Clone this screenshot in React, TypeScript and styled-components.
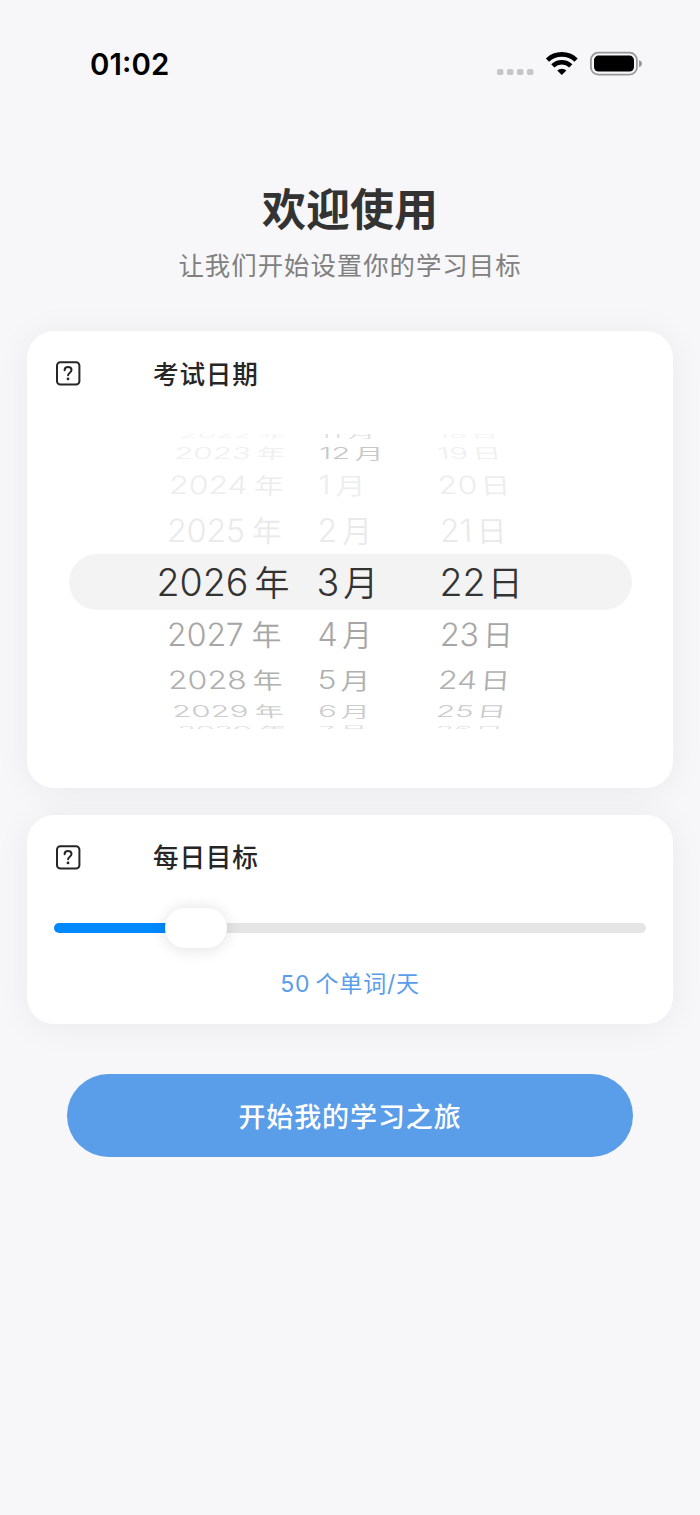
import React from "react";
import styled, { createGlobalStyle } from "styled-components";

const GlobalStyle = createGlobalStyle`
  * { box-sizing: border-box; }
  body {
    margin: 0;
    background: #f7f7fa;
    font-family: Inter, "Noto Sans CJK SC", sans-serif;
    color: #2c2c2c;
  }
`;

const Screen = styled.div`
  width: 700px;
  height: 1515px;
  overflow: hidden;
  display: flex;
  flex-direction: column;
  background: #f7f7fa;
`;

const StatusBar = styled.header`
  flex: none;
  height: 130px;
  padding: 45px 57px 0 90px;
  display: flex;
  align-items: flex-start;
  justify-content: space-between;
`;

const Clock = styled.time`
  font-size: 29.4px;
  font-weight: 560;
  line-height: 40px;
  letter-spacing: 0.1px;
  font-feature-settings: "case";
  color: #000;
`;

const StatusIcons = styled.svg`
  display: block;
  width: 148px;
  height: 40px;
`;

const Heading = styled.div`
  flex: none;
  height: 201px;
  padding-top: 50px;
  text-align: center;
`;

const Title = styled.h1`
  margin: 0;
  font-size: 44px;
  line-height: 60px;
  font-weight: 700;
  color: #333;
`;

const Subtitle = styled.p`
  margin: 10px 0 0;
  font-size: 25.4px;
  line-height: 32px;
  letter-spacing: 1px;
  color: #808080;
`;

const Card = styled.section<{ $height: number }>`
  flex: none;
  height: ${(p) => p.$height}px;
  margin: 0 27px 27px;
  padding: 0 27px;
  border-radius: 27px;
  background: #fff;
  box-shadow: 0 3px 36px rgba(0, 0, 0, 0.055);
`;

const CardHeader = styled.div`
  height: 84px;
  padding-left: 1px;
  display: flex;
  align-items: center;
`;

const HelpIcon = styled.svg`
  display: block;
  width: 26px;
  height: 26px;
  margin-right: 72px;
`;

const CardTitle = styled.h2`
  margin: 0;
  padding-top: 3px;
  font-size: 25.6px;
  line-height: 36px;
  font-weight: 500;
  letter-spacing: 0.8px;
  color: #262626;
`;

const Wheel = styled.div`
  position: relative;
  height: 295px;
  margin: 19px 14.5px 0 14.5px;
  padding: 2px 0 0 89.5px;
  overflow: hidden;
  display: flex;
  align-items: center;
`;

const SelectionBand = styled.div`
  position: absolute;
  left: 0;
  right: 0;
  top: 119.5px;
  height: 56px;
  border-radius: 28px;
  background: #f3f3f3;
`;

const WheelColumn = styled.div<{ $width: number }>`
  position: relative;
  flex: none;
  width: ${(p) => p.$width}px;
`;

const WheelRow = styled.div<{ $height: number }>`
  height: ${(p) => p.$height}px;
  display: flex;
  align-items: center;
`;

const WheelValue = styled.div<{
  $size: number;
  $gap: number;
  $sx: number;
  $sy: number;
  $skew: number;
  $indent: number;
  $tone: string;
}>`
  flex: none;
  margin-left: ${(p) => p.$indent}px;
  display: flex;
  align-items: center;
  gap: ${(p) => p.$gap}px;
  font-size: ${(p) => p.$size}px;
  font-weight: 360;
  line-height: 1;
  white-space: nowrap;
  color: ${(p) => p.$tone};
  transform-origin: left center;
  transform: scale(${(p) => p.$sx}, ${(p) => p.$sy}) skewX(${(p) => p.$skew}deg);
`;

const Unit = styled.span`
  font-family: "Noto Sans CJK SC", sans-serif;
  font-size: 0.93em;
  font-weight: 350;
  line-height: 1;
  padding-bottom: 0.08em;
`;

const Slider = styled.div`
  height: 58px;
  display: flex;
  align-items: center;
`;

const TrackFill = styled.div`
  flex: none;
  width: 125px;
  height: 10px;
  margin-right: -14px;
  border-radius: 5px 0 0 5px;
  background: #0088ff;
`;

const Thumb = styled.div`
  flex: none;
  z-index: 1;
  width: 62px;
  height: 40px;
  border-radius: 20px;
  background: #fff;
  box-shadow: 0 1px 16px rgba(0, 0, 0, 0.13);
`;

const TrackRest = styled.div`
  flex: 1;
  height: 10px;
  margin-left: -14px;
  border-radius: 0 5px 5px 0;
  background: #e5e5e5;
`;

const GoalText = styled.p`
  margin: 11px 0 0;
  text-align: center;
  font-size: 23px;
  line-height: 32px;
  letter-spacing: 0.8px;
  word-spacing: -2px;
  color: #5a9de9;
`;

const StartButton = styled.button`
  flex: none;
  height: 83px;
  margin: 23px 67px 0;
  padding: 0;
  border: 0;
  border-radius: 42px;
  background: #5a9de9;
  color: #fff;
  font-family: "Noto Sans CJK SC", sans-serif;
  font-size: 27px;
  font-weight: 500;
  letter-spacing: 0.9px;
`;

const ROW_HEIGHTS = [17, 20, 43, 49, 55, 50, 40, 21, 17];
const ROW_SCALE_X = [0.92, 0.98, 1, 1, 1, 1, 1, 0.98, 0.94];
const ROW_SCALE_Y = [0.3, 0.51, 0.78, 1, 1.02, 1, 0.78, 0.51, 0.3];
const TONES = ["#f2f2f2", "#f0f0f0", "#ededed", "#eaeaea", "#333", "#a6a6a6", "#b0b0b0", "#cccccc", "#dddddd"];

type Column = {
  unit: string;
  width: number;
  values: string[];
  indents: number[];
  gaps: number[];
  lean: number;
  tones?: Record<number, string>;
};

const COLUMNS: Column[] = [
  {
    unit: "年",
    width: 159,
    values: ["2022", "2023", "2024", "2025", "2026", "2027", "2028", "2029", "2030"],
    indents: [22, 15.5, 10.5, 8.5, -1.5, 8.5, 10, 14, 19.5],
    gaps: [8, 6, 6.5, 7, 6, 7.5, 6, 6, 8],
    lean: -0.7,
  },
  {
    unit: "月",
    width: 123,
    values: ["11", "12", "1", "2", "3", "4", "5", "6", "7"],
    indents: [1.5, 1.5, 1, 0.5, -0.5, 0.5, 0.5, 1, 1],
    gaps: [6, 4, 5, 5, 4, 4.5, 4, 4, 5],
    lean: 0,
    tones: { 0: "#dedede", 1: "#c8c8c8" },
  },
  {
    unit: "日",
    width: 130,
    values: ["18", "19", "20", "21", "22", "23", "24", "25", "26"],
    indents: [-3, -3, -2, -0.5, -0.5, -0.5, -2, -4, -5],
    gaps: [4, 4, 3, 4.5, 2, 4, 3, 3, 3],
    lean: 0.9,
  },
];

function QuestionBox() {
  return (
    <HelpIcon viewBox="0 0 26 26" fill="none" stroke="#262626" strokeWidth="2">
      <rect x="2" y="2.2" width="22.4" height="22.4" rx="3.4" />
      <path d="M9.6 10.3c0-2 1.4-3.2 3.5-3.2s3.4 1.2 3.4 2.9c0 2.7-3.4 2.7-3.4 5.3" strokeLinecap="round" />
      <circle cx="13" cy="18.9" r="1.4" fill="#262626" stroke="none" />
    </HelpIcon>
  );
}

export default function App() {
  return (
    <Screen>
      <GlobalStyle />
      <StatusBar>
        <Clock>01:02</Clock>
        <StatusIcons viewBox="0 0 148 40">
          {[2, 12, 22, 32].map((x) => (
            <rect key={x} x={x} y="24" width="6.4" height="6" rx="1.8" fill="#c6c6c9" />
          ))}
          <g fill="none" stroke="#000" strokeWidth="4.6">
            <path d="M52.5 15.1A20.8 20.8 0 0 1 81.1 15.1" />
            <path d="M57.8 20.8A13 13 0 0 1 75.8 20.8" />
          </g>
          <path d="M66.8 30L62.2 25.6A6.7 6.7 0 0 1 71.4 25.6Z" fill="#000" />
          <rect x="95.9" y="7.6" width="46" height="22" rx="7.4" fill="none" stroke="#98989a" strokeWidth="1.8" />
          <rect x="99" y="10.6" width="40" height="16" rx="4.5" fill="#000" />
          <path d="M144 15.2q3 .8 3 3.4t-3 3.4z" fill="#98989a" />
        </StatusIcons>
      </StatusBar>
      <Heading>
        <Title>欢迎使用</Title>
        <Subtitle>让我们开始设置你的学习目标</Subtitle>
      </Heading>
      <Card $height={456.5}>
        <CardHeader>
          <QuestionBox />
          <CardTitle>考试日期</CardTitle>
        </CardHeader>
        <Wheel>
          <SelectionBand />
          {COLUMNS.map((col) => (
            <WheelColumn key={col.unit} $width={col.width}>
              {col.values.map((value, i) => (
                <WheelRow key={value} $height={ROW_HEIGHTS[i]}>
                  <WheelValue
                    $size={i === 4 ? 37.6 : 32}
                    $gap={col.gaps[i]}
                    $sx={ROW_SCALE_X[i]}
                    $sy={ROW_SCALE_Y[i]}
                    $skew={(4 - i) * col.lean * 1.8}
                    $indent={col.indents[i]}
                    $tone={col.tones?.[i] ?? TONES[i]}
                  >
                    <span>{value}</span>
                    <Unit>{col.unit}</Unit>
                  </WheelValue>
                </WheelRow>
              ))}
            </WheelColumn>
          ))}
        </Wheel>
      </Card>
      <Card $height={209.5}>
        <CardHeader>
          <QuestionBox />
          <CardTitle>每日目标</CardTitle>
        </CardHeader>
        <Slider>
          <TrackFill />
          <Thumb />
          <TrackRest />
        </Slider>
        <GoalText>50 个单词/天</GoalText>
      </Card>
      <StartButton>开始我的学习之旅</StartButton>
    </Screen>
  );
}
